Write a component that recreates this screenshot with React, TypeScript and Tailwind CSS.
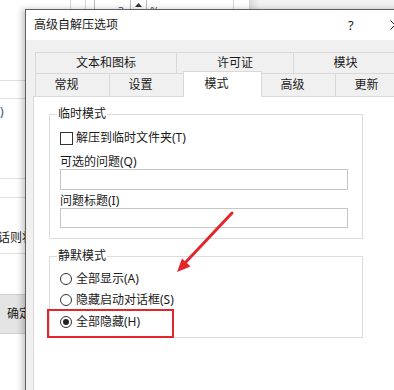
import React from "react"

function TopTab({ className, children }: { className: string; children: React.ReactNode }) {
  return (
    <div
      className={`-ml-px first:ml-0 flex h-[22px] items-center justify-center border border-[#d9d9d9] bg-[#f0f0f0] ${className}`}
    >
      {children}
    </div>
  )
}

function BottomTab({
  className,
  active,
  children,
}: {
  className: string
  active?: boolean
  children: React.ReactNode
}) {
  if (active) {
    return (
      <div
        className={`relative z-10 -ml-px flex h-[26px] items-center justify-center border border-b-0 border-[#d9d9d9] bg-white pb-[2px] pr-[12px] ${className}`}
      >
        {children}
      </div>
    )
  }
  return (
    <div
      className={`-ml-px first:ml-0 flex h-[24px] items-center justify-center border border-[#d9d9d9] bg-[#f0f0f0] pr-[12px] ${className}`}
    >
      {children}
    </div>
  )
}

function Radio({ checked, label }: { checked?: boolean; label: string }) {
  return (
    <div className="flex h-[16px] items-center gap-[4px]">
      <span className="flex h-[12px] w-[12px] items-center justify-center rounded-full border border-[#333] bg-white">
        {checked && <span className="h-[6px] w-[6px] rounded-full bg-[#222]" />}
      </span>
      <span className="leading-[16px]">{label}</span>
    </div>
  )
}

function Backdrop() {
  return (
    <div className="flex flex-col">
      {/* strip of the window behind, above the dialog */}
      <div className="flex h-[9px] overflow-hidden bg-white">
        <div className="w-[71px] border-r border-[#d6d6d6]" />
        <div className="w-[15px] border-r border-[#d6d6d6]" />
        <div className="w-[8px]" />
        <div className="flex w-[53px] border-x border-[#bdbdbd]">
          <div className="w-[36px] border-r border-[#bdbdbd] pr-[6px] text-right text-[11px] leading-[22px] text-[#2b4f8a]">
            3
          </div>
          <div className="flex flex-1 justify-center pt-[3px]">
            <svg width="7" height="4" viewBox="0 0 7 4">
              <path d="M0 4 L3.5 0 L7 4 Z" fill="#333" />
            </svg>
          </div>
        </div>
        <div className="w-[20px] pl-[3px] text-[11px] leading-[22px] text-[#555]">%</div>
        <div className="w-[66px]" />
        <div className="w-[17px] border-x border-[#d6d6d6]" />
        <div className="w-[10px] bg-gradient-to-r from-[#dcdcdc] to-[#f2f2f2]" />
        <div className="flex-1 bg-[#f2f2f2]" />
      </div>

      <div className="w-[25px] overflow-hidden">
        <div className="h-[72px] border-b border-[#dedede]" />
        <div className="h-[18px] border-b border-[#dedede]" />
        <div className="h-[80px] border-b border-[#dedede] pt-[5px] leading-[16px] text-[#2b4f8a]">)</div>
        <div className="h-[19px] border-b border-[#dedede]" />
        <div className="h-[56px] border-b border-[#dedede] pt-[32px]">
          <div className="-ml-[14px] whitespace-nowrap leading-[16px]">对话则将</div>
        </div>
        <div className="h-[40px]" />
        <div className="flex h-[40px] items-center whitespace-nowrap border-y border-[#cfcfcf] bg-[#e4e4e4] pl-[7px]">
          确定
        </div>
      </div>
    </div>
  )
}

export default function App() {
  return (
    <div className="relative h-[390px] w-[394px] overflow-hidden bg-white font-['Noto_Sans','Noto_Sans_CJK_SC',sans-serif] text-[12px] text-[#1a1a1a]">
      <Backdrop />

      {/* 高级自解压选项 dialog */}
      <div className="absolute left-[25px] top-[9px] h-[390px] w-[400px] border-l border-t border-[#5f5f5f] bg-[#f0f0f0] shadow-[-3px_0_6px_rgba(0,0,0,0.22)]">
        <div className="flex h-[30px] items-center bg-white">
          <span className="w-[322px] pl-[8px] leading-[16px]">高级自解压选项</span>
          <span className="w-[42px] text-[13px] leading-[16px]">?</span>
          <svg width="10" height="10" viewBox="0 0 10 10">
            <path d="M0.5 0.5 L9.5 9.5 M9.5 0.5 L0.5 9.5" stroke="#1a1a1a" strokeWidth="1" />
          </svg>
        </div>

        <div className="pl-[7px] pt-[12px]">
          <div className="ml-[2px] flex">
            <TopTab className="w-[142px] shrink-0">文本和图标</TopTab>
            <TopTab className="w-[118px] shrink-0">许可证</TopTab>
            <TopTab className="w-[105px] shrink-0">模块</TopTab>
          </div>
          <div className="-mt-[3px] ml-[2px] flex h-[26px] items-end">
            <BottomTab className="w-[75px] shrink-0">常规</BottomTab>
            <BottomTab className="w-[75px] shrink-0">设置</BottomTab>
            <BottomTab className="w-[79px] shrink-0" active>
              模式
            </BottomTab>
            <BottomTab className="w-[75px] shrink-0">高级</BottomTab>
            <BottomTab className="w-[75px] shrink-0">更新</BottomTab>
          </div>

          <div className="-mt-px h-[300px] border border-[#d9d9d9] bg-white pl-[15px] pt-[9px]">
            <fieldset className="w-[314px] border border-[#dcdcdc] pb-[10px] pl-[10px]">
              <legend className="-ml-[3px] px-px leading-[16px]">临时模式</legend>
              <div className="mt-[8px] flex h-[16px] items-center gap-[3px]">
                <span className="h-[13px] w-[13px] border border-[#333] bg-white" />
                <span className="leading-[16px]">解压到临时文件夹(T)</span>
              </div>
              <div className="mt-[8px] leading-[15px]">可选的问题(Q)</div>
              <div className="h-[21px] w-[288px] border border-[#c6c6c6] bg-white" />
              <div className="mt-[3px] leading-[15px]">问题标题(I)</div>
              <div className="h-[20px] w-[288px] border border-[#c6c6c6] bg-white" />
            </fieldset>

            <fieldset className="mt-[9px] w-[314px] border border-[#dcdcdc] pb-[7px] pl-[10px]">
              <legend className="-ml-[3px] px-px leading-[16px]">静默模式</legend>
              <div className="mt-[7px]">
                <Radio label="全部显示(A)" />
              </div>
              <div className="mt-[5px]">
                <Radio label="隐藏启动对话框(S)" />
              </div>
              <div className="mt-[6px]">
                <Radio label="全部隐藏(H)" checked />
              </div>
            </fieldset>
          </div>
        </div>
      </div>

      {/* red annotation: highlight box and arrow */}
      <div className="pointer-events-none absolute left-[47px] top-[309px] h-[29px] w-[127px] border-2 border-[#e3252c]" />
      <svg className="pointer-events-none absolute left-0 top-0" width="394" height="390" viewBox="0 0 394 390">
        <line x1="232" y1="213" x2="184" y2="264" stroke="#e3252c" strokeWidth="3" strokeLinecap="round" />
        <polygon points="177,272 190.5,266.5 182,258.5" fill="#e3252c" />
      </svg>
    </div>
  )
}
